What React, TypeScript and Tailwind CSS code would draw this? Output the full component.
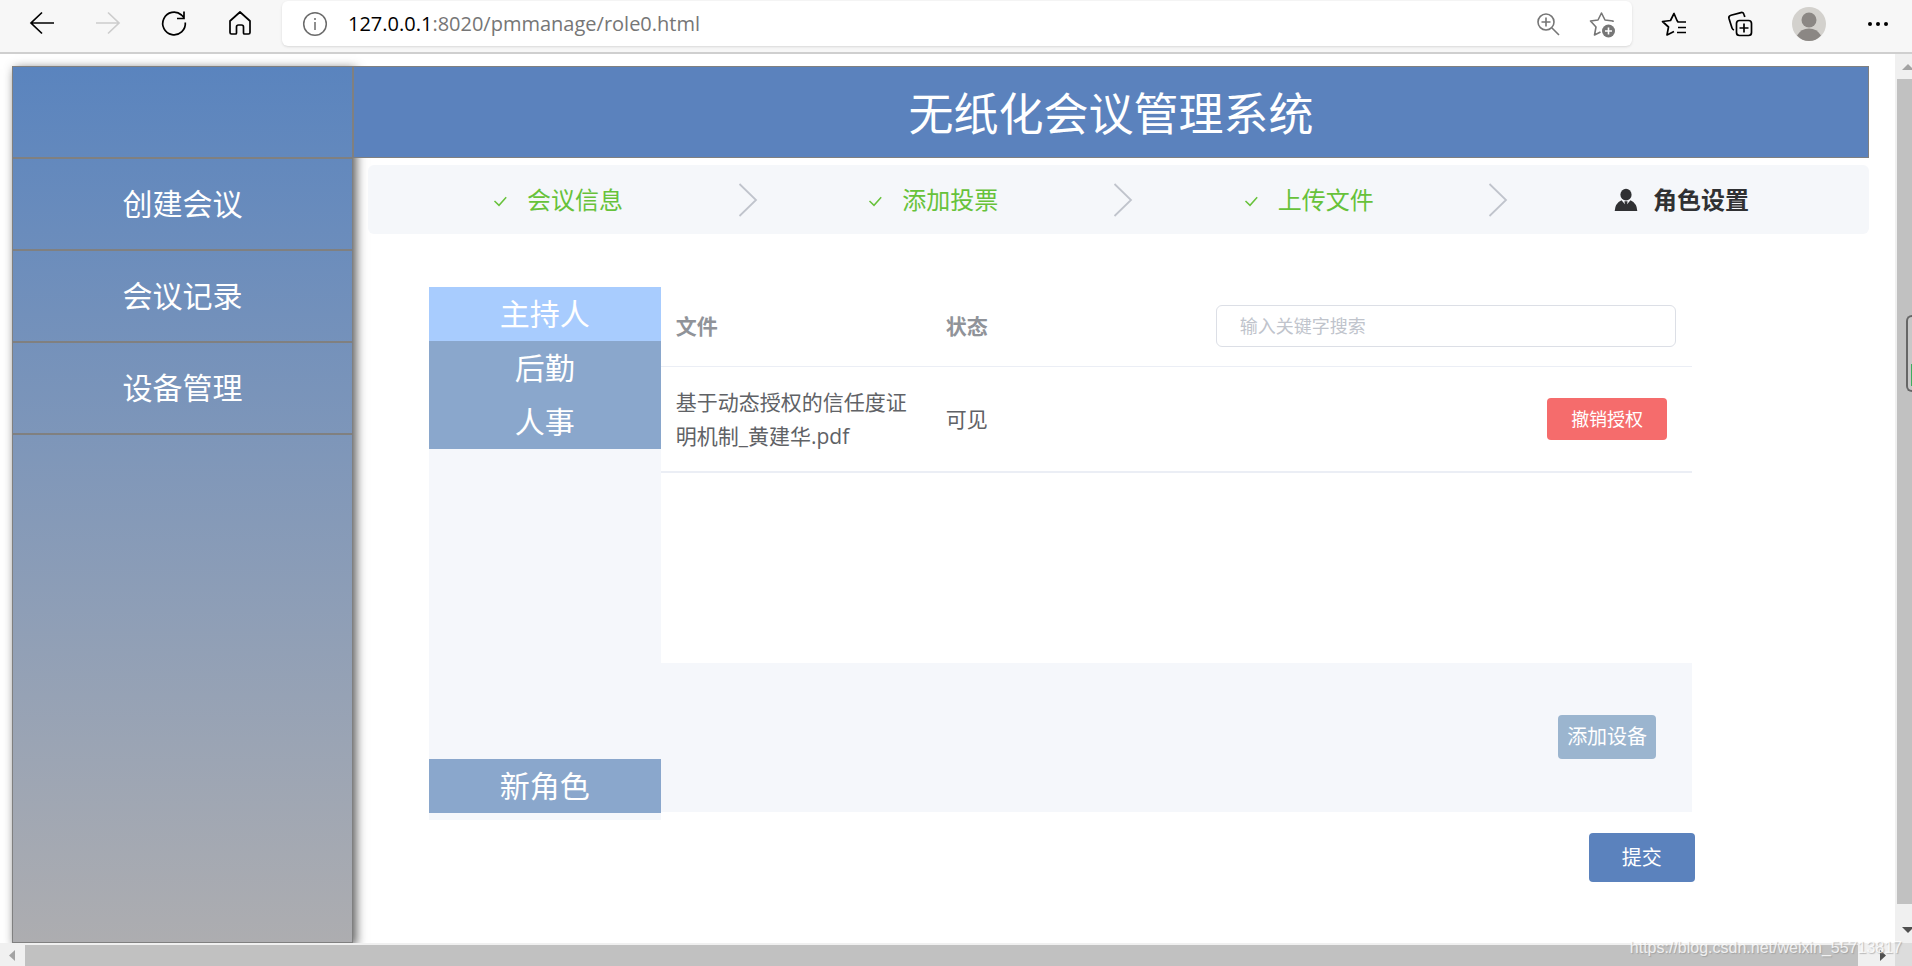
import React, { useState } from 'react';

const menuItems = ['创建会议', '会议记录', '设备管理'];
const doneSteps = ['会议信息', '添加投票', '上传文件'];
const roles = ['主持人', '后勤', '人事'];

const files = [
  { name: '基于动态授权的信任度证明机制_黄建华.pdf', status: '可见' }
];

const BrowserBar: React.FC = () => (
  <div className="flex h-[54px] shrink-0 items-start border-b-2 border-[#cfcfcf] bg-[#f7f7f7] text-black">
    <div className="flex h-[46px] w-[282px] shrink-0 items-center gap-[34px] pl-[26px]">
      <button aria-label="后退" className="h-8 w-8">
        <svg viewBox="0 0 32 32" className="h-8 w-8" fill="none" stroke="currentColor" strokeWidth="1.700">
          <path d="M28 16H4.500M16 5.500L5 16L16 26.500" />
        </svg>
      </button>
      <button aria-label="前进" className="h-8 w-8 text-[#cdcdcd]">
        <svg viewBox="0 0 32 32" className="h-8 w-8" fill="none" stroke="currentColor" strokeWidth="1.700">
          <path d="M4 16H27.500M16 5.500L27 16L16 26.500" />
        </svg>
      </button>
      <button aria-label="刷新" className="h-8 w-8">
        <svg viewBox="0 0 32 32" className="h-8 w-8" fill="none" stroke="currentColor" strokeWidth="1.700">
          <path d="M27.300 15.500A11.300 11.300 0 1 1 23.500 8L26.300 10.800M26 4.500V11.500H19" />
        </svg>
      </button>
      <button aria-label="主页" className="h-8 w-8">
        <svg viewBox="0 0 32 32" className="h-8 w-8" fill="none" stroke="currentColor" strokeWidth="1.700" strokeLinejoin="round">
          <path d="M6 14L16 5L26 14V25.500Q26 27 24.500 27H20.500Q19.500 27 19.500 26V20Q19.500 18 17.500 18H14.500Q12.500 18 12.500 20V26Q12.500 27 11.500 27H7.500Q6 27 6 25.500Z" />
        </svg>
      </button>
    </div>
    <div className="mt-px flex h-[45px] flex-1 items-center rounded-md bg-white pl-5 pr-4 shadow-sm">
      <svg viewBox="0 0 26 26" className="h-[26px] w-[26px] shrink-0" fill="none" stroke="#6b6b6b" strokeWidth="1.500">
        <circle cx="13" cy="13" r="11.300" />
        <path d="M13 11V19M13 7V9" />
      </svg>
      <div className="flex-1 pl-5 text-[20px] leading-7 text-[#767676]">
        <span className="text-black">127.0.0.1</span>:8020/pmmanage/role0.html
      </div>
      <button aria-label="缩放" className="mr-[26px] h-7 w-7">
        <svg viewBox="0 0 28 28" className="h-7 w-7" fill="none" stroke="#767676" strokeWidth="1.600">
          <circle cx="12" cy="12" r="8" />
          <path d="M18 18L25 25M12 7.500V16.500M7.500 12H16.500" />
        </svg>
      </button>
      <button aria-label="收藏" className="h-7 w-7">
        <svg viewBox="0 0 28 28" className="h-7 w-7" fill="none" stroke="#767676" strokeWidth="1.600" strokeLinejoin="round">
          <path d="M25 12V11L17 10L13.500 3L10 10L2.500 11L8 17L6.500 25L12.500 22" />
          <circle cx="20.500" cy="21" r="6.500" fill="#767676" stroke="none" />
          <path d="M20.500 17.500V24.500M17 21H24" stroke="#fff" />
        </svg>
      </button>
    </div>
    <div className="flex h-[47px] w-[280px] shrink-0 items-center pl-7">
      <button aria-label="收藏夹" className="mr-[38px] h-7 w-7">
        <svg viewBox="0 0 28 28" className="h-7 w-7" fill="none" stroke="currentColor" strokeWidth="1.700" strokeLinejoin="round">
          <path d="M26 12H18L17 10.500L14 3.500L10.500 10.500L2.500 11.500L8.500 17L7 25L14 21.500M18 17.500H26M17 22.500H26" />
        </svg>
      </button>
      <button aria-label="集锦" className="mr-[38px] h-7 w-7">
        <svg viewBox="0 0 28 28" className="h-7 w-7" fill="none" stroke="currentColor" strokeWidth="1.700">
          <path d="M18.800 7L18 4.500Q17.300 2 15 2.600L5 5.200Q2.300 6 3 8.500L6 18Q6.500 19.500 8 20" />
          <rect x="10.500" y="10.500" width="15" height="15" rx="3" />
          <path d="M18 13.500V22.500M13.500 18H22.500" />
        </svg>
      </button>
      <button aria-label="用户" className="mr-10 h-[34px] w-[34px]">
        <svg viewBox="0 0 34 34" className="h-[34px] w-[34px]">
          <circle cx="17" cy="17" r="17" fill="#d3d1cd" />
          <circle cx="17" cy="13" r="7.500" fill="#8b8784" />
          <path d="M5 28.500Q9 21.500 17 21.500T29 28.500Q24 34 17 34T5 28.500Z" fill="#8b8784" />
        </svg>
      </button>
      <button aria-label="更多" className="h-6 w-6">
        <svg viewBox="0 0 24 24" className="h-6 w-6" fill="currentColor">
          <circle cx="4" cy="12" r="2" />
          <circle cx="12" cy="12" r="2" />
          <circle cx="20" cy="12" r="2" />
        </svg>
      </button>
    </div>
  </div>
);

const Sidebar: React.FC = () => (
  <nav className="w-[341px] shrink-0 border border-[#808080] bg-linear-to-b from-[#5a84be] to-[#adadb0] text-[30px] text-white shadow-[3px_3px_10px_#555]">
    <div className="h-[92px] border-b-2 border-[#808080]" />
    {menuItems.map((item) => (
      <a
        key={item}
        href="#"
        className="flex h-[92px] items-center justify-center border-b-2 border-[#808080] pb-[2px]"
      >
        {item}
      </a>
    ))}
  </nav>
);

const Steps: React.FC = () => (
  <ol className="ml-[15px] mt-[7px] flex h-[69px] items-center rounded-md bg-[#f5f7fa] px-[120px] text-[24px]">
    {doneSteps.map((step) => (
      <li key={step} className="flex flex-1 items-center text-[#67c23a]">
        <svg viewBox="0 0 24 24" className="mr-[15px] h-6 w-6" fill="none" stroke="currentColor" strokeWidth="1.500">
          <path d="M6.500 13L11 17.300L18.200 9.300" />
        </svg>
        {step}
        <div className="flex flex-1 justify-center pl-[9px]">
          <svg viewBox="0 0 20 36" className="h-9 w-5" fill="none" stroke="#c0c4cc" strokeWidth="1.800">
            <path d="M1.500 2L18 18L1.500 34" />
          </svg>
        </div>
      </li>
    ))}
    <li className="flex items-center font-bold text-[#303133]">
      <svg viewBox="0 0 24 24" className="mr-[15px] h-6 w-6" fill="currentColor">
        <ellipse cx="12" cy="6.700" rx="5.600" ry="5.900" />
        <path d="M0.700 23Q1 15.500 7.500 12.300L12 17.500L16.500 12.300Q23 15.500 23.300 23Z" />
        <path d="M10.500 13.200H13.500L13 18H11Z" />
      </svg>
      角色设置
    </li>
  </ol>
);

const RolePanel: React.FC = () => {
  const [active, setActive] = useState('主持人');
  const [keyword, setKeyword] = useState('');
  const visible = files.filter((file) => file.name.includes(keyword));

  return (
    <div className="ml-[5%] mt-[53px] flex w-5/6 items-start">
      <div className="flex min-h-[533px] w-[232px] shrink-0 flex-col bg-[#f5f7fb] pb-[7px] text-[30px] text-white">
        {roles.map((role) => (
          <button
            key={role}
            onClick={() => setActive(role)}
            className={`h-[54px] leading-[54px] ${role === active ? 'bg-[#a8ccfe]' : 'bg-[#8aa7cc]'}`}
          >
            {role}
          </button>
        ))}
        <button className="mt-auto h-[54px] bg-[#8aa7cc] leading-[54px]">新角色</button>
      </div>

      <div className="flex-1">
        <div className="min-h-[376px]">
          <table className="w-full table-fixed text-left text-[21px] leading-[34px] text-[#606266]">
            <thead className="text-[#909399]">
              <tr className="h-[79px] border-b border-[#ebeef5]">
                <th className="w-[270px] px-[15px] font-bold">文件</th>
                <th className="w-[270px] px-[15px] font-bold">状态</th>
                <th className="pl-[15px] pr-4">
                  <input
                    aria-label="输入关键字搜索"
                    placeholder="输入关键字搜索"
                    value={keyword}
                    onChange={(e) => setKeyword(e.target.value)}
                    className="block h-[42px] w-full rounded-md border border-[#dcdfe6] px-[23px] text-[18px] font-normal text-[#606266] placeholder:text-[#c0c4cc]"
                  />
                </th>
              </tr>
            </thead>
            <tbody>
              {visible.map((file) => (
                <tr key={file.name} className="border-b-2 border-[#ebeef5]">
                  <td className="px-[15px] py-[18px]">{file.name}</td>
                  <td className="px-[15px] py-[18px]">{file.status}</td>
                  <td className="px-[25px] py-[18px] text-right">
                    <button className="h-[42px] w-[120px] rounded-sm bg-[#f56c6c] align-middle text-[18px] leading-[42px] text-white">
                      撤销授权
                    </button>
                  </td>
                </tr>
              ))}
            </tbody>
          </table>
        </div>
        <div className="flex h-[149px] items-start justify-end bg-[#f5f7fb] pr-9 pt-[52px]">
          <button className="h-11 w-[98px] rounded-sm bg-[#9bb5cf] text-[20px] text-white">添加设备</button>
        </div>
      </div>
    </div>
  );
};

const App: React.FC = () => (
  <div className="relative flex h-screen flex-col overflow-hidden bg-white font-['Open_Sans','Noto_Sans_CJK_SC',sans-serif]">
    <BrowserBar />

    <div className="flex min-h-0 flex-1">
      <div className="flex min-w-0 flex-1 overflow-hidden pl-3 pr-[26px] pt-3">
        <Sidebar />
        <main className="min-w-0 flex-1">
          <h1 className="relative flex h-[92px] items-center justify-center border border-[#808080] bg-[#5b82bd] pt-1 text-[45px] text-white">
            无纸化会议管理系统
          </h1>
          <Steps />
          <RolePanel />
          <div className="mt-[13px] flex justify-end pr-[11.5%]">
            <button className="h-[49px] w-[106px] rounded-sm bg-[#5b82bd] text-[20px] text-white">提交</button>
          </div>
        </main>
      </div>

      {/* vertical scrollbar */}
      <div className="flex w-[17px] shrink-0 flex-col overflow-hidden bg-[#f0f0f0] pl-[2px]">
        <svg viewBox="0 0 15 25" className="h-[25px] w-[15px] shrink-0" fill="#a3a3a3">
          <path d="M5 16L11 10L17 16Z" />
        </svg>
        <div className="flex-1 bg-[#c1c1c1]" />
        <svg viewBox="0 0 15 39" className="h-[39px] w-[15px] shrink-0" fill="#505050">
          <path d="M5 23H17L11 29Z" />
        </svg>
      </div>
    </div>

    {/* horizontal scrollbar */}
    <div className="flex h-[23px] shrink-0 bg-[#f0f0f0]">
      <svg viewBox="0 0 25 23" className="h-[23px] w-[25px] shrink-0" fill="#a3a3a3">
        <path d="M15 7V18L9 12.500Z" />
      </svg>
      <div className="mt-[2px] flex-1 bg-[#c1c1c1]" />
      <svg viewBox="0 0 37 23" className="h-[23px] w-[37px] shrink-0" fill="#505050">
        <path d="M22 7V18L28 12.500Z" />
      </svg>
      <div className="w-[17px] bg-[#dcdcdc]" />
    </div>

    <div className="absolute right-0 top-[315px] flex h-[77px] w-[6px] items-end rounded-l-md border-2 border-r-0 border-[#666] bg-[#c8c8c8] pb-1">
      <div className="ml-auto h-[22px] w-px bg-[#3fae5f]" />
    </div>

    <div className="absolute bottom-2 right-[10px] font-['Liberation_Sans',sans-serif] text-[16px] leading-5 text-white/80 [text-shadow:1px_1px_1px_#8888]">
      https://blog.csdn.net/weixin_55713817
    </div>
  </div>
);

export default App;
